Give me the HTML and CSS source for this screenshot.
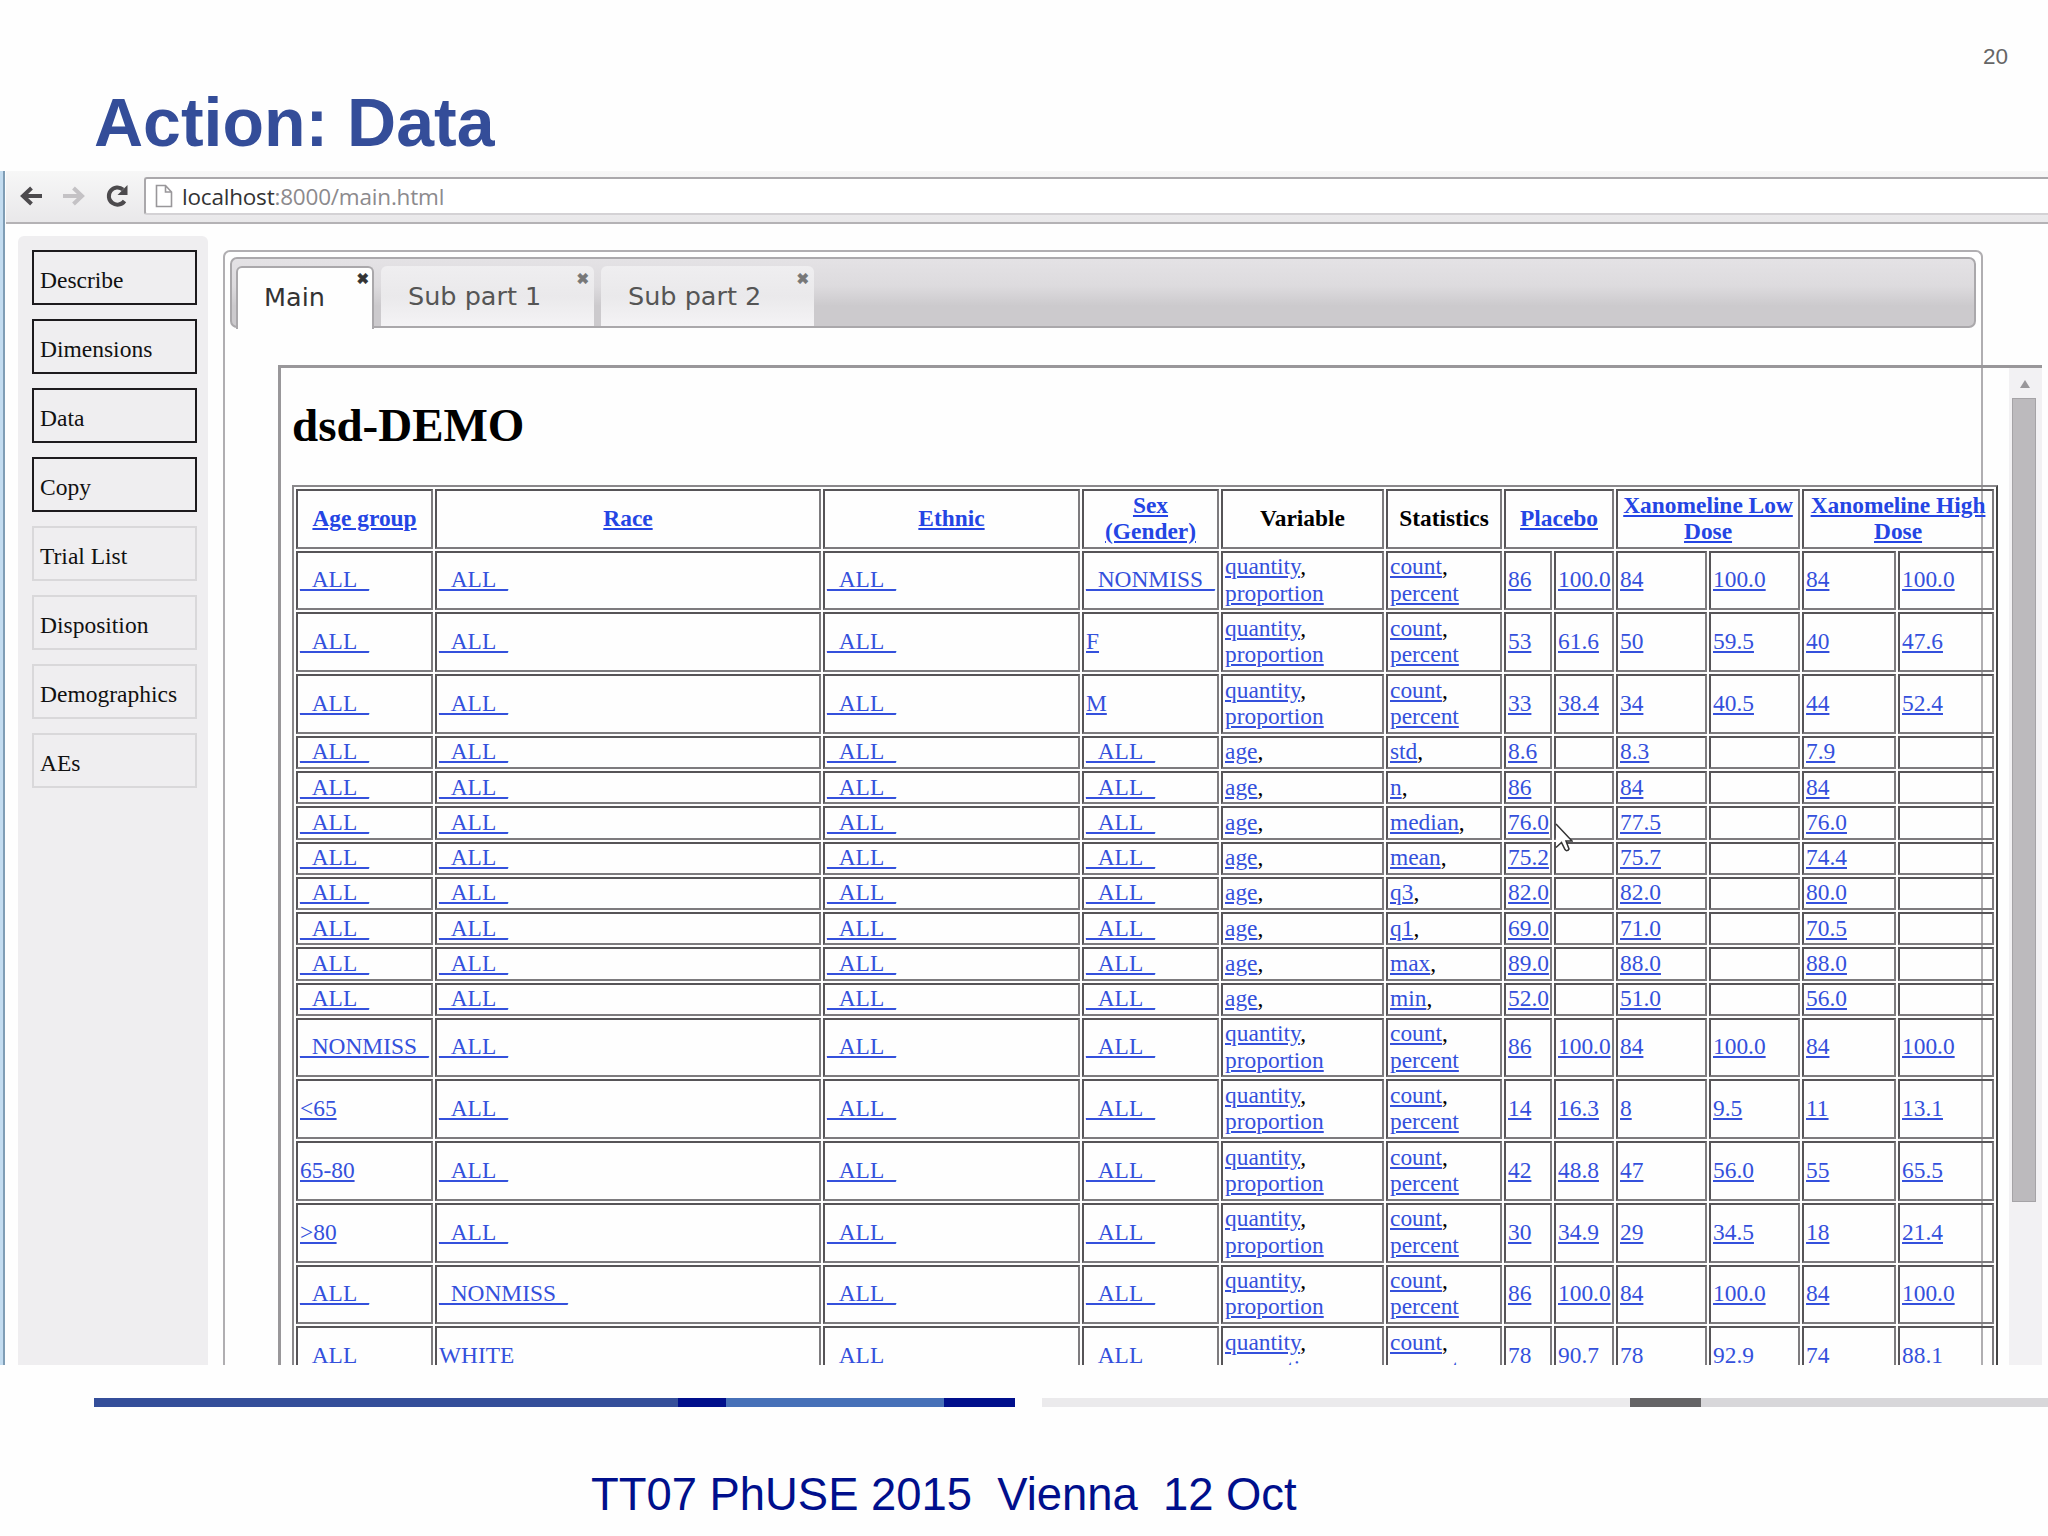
FILE: index.html
```
<!DOCTYPE html>
<html lang="en">
<head>
    <meta charset="UTF-8">
    <title>Action: Data</title>
    <link rel="stylesheet" href="styles.css">
</head>
<body>
    <div class="slide">
        <header class="slide-header">
            <h1 class="slide-title">Action: Data</h1>
            <span class="page-number">20</span>
        </header>

        <div class="browser">
            <div class="toolbar">
                <svg class="nav-icon back" viewBox="0 0 24 24"><path d="M12.5 4 L4 12 L12.5 20 M4 12 H23"/></svg>
                <svg class="nav-icon forward" viewBox="0 0 24 24"><path d="M11.5 4 L20 12 L11.5 20 M20 12 H1"/></svg>
                <svg class="nav-icon reload" viewBox="0 0 24 24"><path d="M18 5.5 A8.6 8.6 0 1 0 19.5 17"/><path class="head" d="M22.5 1 V11 H12.5 Z"/></svg>
                <div class="address">
                    <svg class="page-icon" viewBox="0 0 18 24"><path d="M1.5 1.5 H10.5 L16.5 8 V22.5 H1.5 Z M10.5 1.5 V8 H16.5"/></svg>
                    <span class="url"><b>localhost</b>:8000/main.html</span>
                </div>
            </div>

            <div class="page">
                <nav class="sidebar">
                    <div class="action active">Describe</div>
                    <div class="action active">Dimensions</div>
                    <div class="action active">Data</div>
                    <div class="action active">Copy</div>
                    <div class="action">Trial List</div>
                    <div class="action">Disposition</div>
                    <div class="action">Demographics</div>
                    <div class="action">AEs</div>
                </nav>

                <main class="tabs">
                    <div class="tab-bar">
                        <div class="tab selected">Main<span class="close">✖</span></div>
                        <div class="tab">Sub part 1<span class="close">✖</span></div>
                        <div class="tab">Sub part 2<span class="close">✖</span></div>
                    </div>
                    <section class="frame">
                        <div class="document">
                            <h2>dsd-DEMO</h2>
                            <table class="cube">
                                <colgroup>
                                    <col class="c-age"><col class="c-race"><col class="c-ethnic"><col class="c-sex">
                                    <col class="c-var"><col class="c-stat"><col class="c-p1"><col class="c-p2">
                                    <col class="c-l1"><col class="c-l2"><col class="c-h1"><col class="c-h2">
                                </colgroup>
                                <thead>
                                    <tr>
                                        <th><a>Age group</a></th>
                                        <th><a>Race</a></th>
                                        <th><a>Ethnic</a></th>
                                        <th><a>Sex<br>(Gender)</a></th>
                                        <th>Variable</th>
                                        <th>Statistics</th>
                                        <th colspan="2"><a>Placebo</a></th>
                                        <th colspan="2"><a>Xanomeline Low Dose</a></th>
                                        <th colspan="2"><a>Xanomeline High Dose</a></th>
                                    </tr>
                                </thead>
                                <tbody id="rows"></tbody>
                            </table>
                        </div>
                        <div class="scrollbar">
                            <div class="arrow"></div>
                            <div class="thumb"></div>
                        </div>
                    </section>
                </main>
            </div>
            <svg class="cursor" viewBox="0 0 18 30"><path d="M1 1 L17 18 H11 L14 26 Q12 29 10 26.5 L6.5 19.5 L1 24.5"/></svg>
        </div>

        <div class="rule">
            <span class="r1"></span><span class="r2"></span><span class="r3"></span><span class="r4"></span>
            <span class="r5"></span><span class="r6"></span><span class="r7"></span>
        </div>
        <footer class="slide-footer">TT07 PhUSE 2015&nbsp; Vienna&nbsp; 12 Oct</footer>
    </div>

    <script>
        const ALL = '_ALL_', NM = '_NONMISS_';
        const QP = ['quantity', 'proportion'], CP = ['count', 'percent'];

        // age group, race, ethnic, sex, variable, statistics, then two values per arm
        const data = [
            [ALL, ALL, ALL, NM, QP, CP, '86', '100.0', '84', '100.0', '84', '100.0'],
            [ALL, ALL, ALL, 'F', QP, CP, '53', '61.6', '50', '59.5', '40', '47.6'],
            [ALL, ALL, ALL, 'M', QP, CP, '33', '38.4', '34', '40.5', '44', '52.4'],
            [ALL, ALL, ALL, ALL, ['age'], ['std'], '8.6', '', '8.3', '', '7.9', ''],
            [ALL, ALL, ALL, ALL, ['age'], ['n'], '86', '', '84', '', '84', ''],
            [ALL, ALL, ALL, ALL, ['age'], ['median'], '76.0', '', '77.5', '', '76.0', ''],
            [ALL, ALL, ALL, ALL, ['age'], ['mean'], '75.2', '', '75.7', '', '74.4', ''],
            [ALL, ALL, ALL, ALL, ['age'], ['q3'], '82.0', '', '82.0', '', '80.0', ''],
            [ALL, ALL, ALL, ALL, ['age'], ['q1'], '69.0', '', '71.0', '', '70.5', ''],
            [ALL, ALL, ALL, ALL, ['age'], ['max'], '89.0', '', '88.0', '', '88.0', ''],
            [ALL, ALL, ALL, ALL, ['age'], ['min'], '52.0', '', '51.0', '', '56.0', ''],
            [NM, ALL, ALL, ALL, QP, CP, '86', '100.0', '84', '100.0', '84', '100.0'],
            ['&lt;65', ALL, ALL, ALL, QP, CP, '14', '16.3', '8', '9.5', '11', '13.1'],
            ['65-80', ALL, ALL, ALL, QP, CP, '42', '48.8', '47', '56.0', '55', '65.5'],
            ['&gt;80', ALL, ALL, ALL, QP, CP, '30', '34.9', '29', '34.5', '18', '21.4'],
            [ALL, NM, ALL, ALL, QP, CP, '86', '100.0', '84', '100.0', '84', '100.0'],
            [ALL, 'WHITE', ALL, ALL, QP, CP, '78', '90.7', '78', '92.9', '74', '88.1']
        ];

        function cell(value) {
            if (Array.isArray(value)) {
                return `<td><a>${value[0]}</a>,${value[1] ? ` <a>${value[1]}</a>` : ''}</td>`;
            }
            return value ? `<td><a>${value}</a></td>` : '<td></td>';
        }

        document.getElementById('rows').innerHTML = data.map(row =>
            `<tr class="${row[4].length > 1 ? 'tall' : 'short'}">${row.map(cell).join('')}</tr>`
        ).join('');
    </script>
</body>
</html>
```
FILE: styles.css
```
* {
    box-sizing: border-box;
}
body {
    margin: 0;
    background: #fefefe;
    font-family: "Liberation Sans", Arial, sans-serif;
}
.slide {
    width: 2048px;
    height: 1536px;
    overflow: hidden;
    display: flex;
    flex-direction: column;
}
.slide-header {
    height: 171px;
    flex: none;
    display: flex;
    justify-content: space-between;
    padding: 44px 40px 0 94px;
}
.slide-title {
    margin: 38px 0 0;
    font-size: 68px;
    line-height: 80px;
    color: #344d99;
}
.page-number {
    font-size: 22.5px;
    line-height: 26px;
    color: #666;
}

/* browser window */
.browser {
    position: relative;
    height: 1194px;
    flex: none;
    overflow: hidden;
    display: flex;
    flex-direction: column;
    border-left: 3px solid #c3dcf0;
    box-shadow: inset 2px 0 0 #7f9db5;
    padding-left: 3px;
}
.toolbar {
    height: 53px;
    flex: none;
    display: flex;
    align-items: center;
    padding: 0 0 2px 13px;
    background: linear-gradient(#f7f7f7, #e9e8ea);
    border-bottom: 2px solid #b4b2b5;
}
.nav-icon {
    width: 24px;
    height: 24px;
    margin-right: 19px;
    fill: none;
    stroke: #4c4a4d;
    stroke-width: 4;
}
.nav-icon.forward {
    stroke: #c4c2c5;
}
.nav-icon.reload {
    margin-right: 15px;
}
.nav-icon .head {
    fill: #4c4a4d;
    stroke: none;
}
.address {
    flex: 1;
    height: 38px;
    display: flex;
    align-items: center;
    padding-left: 9px;
    background: #fff;
    border: 2px solid #aaa8ab;
    border-right: 0;
    border-bottom-color: #d4d2d5;
    border-radius: 3px 0 0 3px;
}
.page-icon {
    width: 18px;
    height: 24px;
    margin-right: 9px;
    fill: #fff;
    stroke: #99979a;
    stroke-width: 1.6;
}
.url {
    padding-top: 1px;
    font-family: "Open Sans", sans-serif;
    font-size: 22.5px;
    letter-spacing: -0.2px;
    color: #8c8a8d;
}
.url b {
    font-weight: normal;
    color: #333;
}

.page {
    flex: 1;
    display: flex;
    align-items: stretch;
    padding: 12px 0 0 12px;
    font-family: "Liberation Serif", "Times New Roman", serif;
}
.sidebar {
    width: 190px;
    flex: none;
    display: flex;
    flex-direction: column;
    gap: 14px;
    padding: 14px 11px 0 14px;
    background: #efeef0;
    border-radius: 6px 6px 0 0;
}
.action {
    height: 55px;
    padding: 14px 0 0 6px;
    border: 2px solid #d9d8da;
    font-size: 23.5px;
    line-height: 28px;
    color: #111;
}
.action.active {
    border-color: #1c1a1d;
}

/* tab widget */
.tabs {
    width: 1760px;
    flex: none;
    margin: 14px 0 0 15px;
    padding: 5px;
    border: 2px solid #b0aeb1;
    border-bottom: 0;
    border-radius: 7px 7px 0 0;
}
.tab-bar {
    height: 71px;
    display: flex;
    align-items: flex-end;
    gap: 7px;
    padding-left: 4px;
    border: 2px solid #aaa8ab;
    border-radius: 7px;
    background: linear-gradient(#e4e2e5, #dddbde 40%, #cccacd 70%, #cccacd);
}
.tab {
    position: relative;
    width: 213px;
    height: 60px;
    padding: 12px 0 0 27px;
    border-radius: 6px 6px 0 0;
    background: linear-gradient(#efeef0, #eae9eb 50%, #f4f3f5);
    font-family: Verdana, "DejaVu Sans", sans-serif;
    font-size: 25.5px;
    line-height: 36px;
    color: #555;
}
.tab.selected {
    width: 138px;
    height: 63px;
    margin: 0 0 -3px;
    background: #fefefe;
    color: #333;
    border: 2px solid #aaa8ab;
    border-bottom: 0;
    padding: 11px 0 0 26px;
}
.close {
    position: absolute;
    top: 4px;
    right: 5px;
    font-size: 15px;
    line-height: 18px;
    color: #777;
    -webkit-text-stroke: 0.6px;
}
.selected .close {
    top: 2px;
    right: 3px;
    color: #333;
}

/* embedded report, wider than the tab widget */
.frame {
    width: 1764px;
    height: 1000px;
    margin: 37px 0 0 48px;
    display: flex;
    justify-content: space-between;
    border-top: 3px solid #99979a;
    border-left: 3px solid #99979a;
}
.document {
    padding-left: 11px;
}
h2 {
    margin: 30px 0 33px;
    font-size: 47px;
    line-height: 54px;
    color: #000;
}
.cube {
    table-layout: fixed;
    width: 1706px;
    border: 2px solid #8a888b;
    border-right-color: #444;
    border-spacing: 2px;
    font-size: 23.4px;
    line-height: 26.2px;
}
.c-age { width: 137px; }
.c-race { width: 386px; }
.c-ethnic { width: 257px; }
.c-sex { width: 137px; }
.c-var { width: 163px; }
.c-stat { width: 116px; }
.c-p1 { width: 48px; }
.c-p2 { width: 60px; }
.c-l1 { width: 91px; }
.c-l2 { width: 91px; }
.c-h1 { width: 94px; }
.c-h2 { width: 96px; }
.cube th, .cube td {
    padding: 0 2px 2px;
    border: 2px solid #7d7b7e;
    border-top-color: #565457;
    border-left-color: #565457;
    vertical-align: middle;
}
.cube th, .tall td {
    height: 59.7px;
}
.short td {
    height: 33.25px;
}
.cube a {
    color: #3450dc;
    text-decoration: underline;
}
.cube th a {
    color: #2445e4;
}

.scrollbar {
    width: 33px;
    padding: 2px 6px 0 3px;
    background: #f2f1f3;
}
.arrow {
    width: 10px;
    height: 8px;
    margin: 10px 0 10px 8px;
    background: #99979a;
    clip-path: polygon(50% 0, 100% 100%, 0 100%);
}
.thumb {
    height: 804px;
    background: #bcbabd;
    border: 1px solid #a5a3a6;
}
.cursor {
    position: absolute;
    left: 1552px;
    top: 652px;
    width: 18px;
    height: 30px;
    fill: #fff;
    stroke: #333;
    stroke-width: 1.5;
}

/* slide footer */
.rule {
    height: 9px;
    flex: none;
    margin: 33px 0 0 94px;
    display: flex;
}
.r1 { width: 584px; background: #344e9a; }
.r2 { width: 48px; background: #000f8c; }
.r3 { width: 218px; background: #4670b8; }
.r4 { width: 71px; background: #000f8c; margin-right: 27px; }
.r5 { width: 588px; background: #ebeaec; }
.r6 { width: 71px; background: #656466; }
.r7 { flex: 1; background: #d8d7da; }
.slide-footer {
    margin: 62px 0 0 591px;
    font-size: 45.4px;
    line-height: 52px;
    color: #000f8c;
}
```
